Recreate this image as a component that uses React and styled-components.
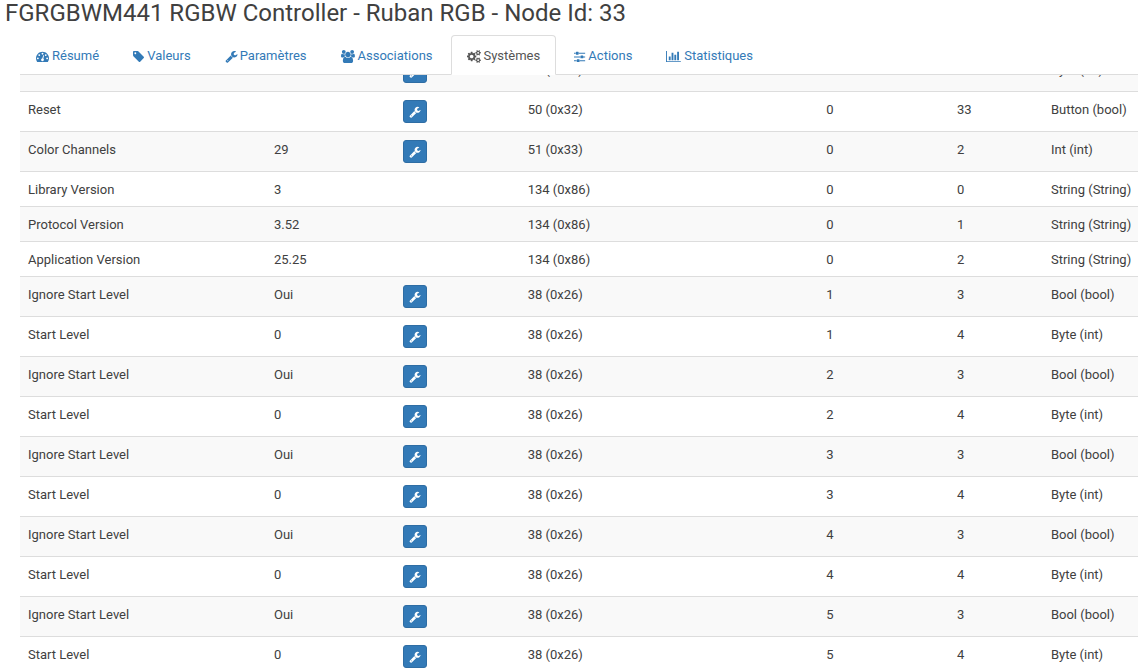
import React, { useLayoutEffect, useRef } from "react";
import styled, { createGlobalStyle } from "styled-components";

const blue = "#337ab7";
const darkBlue = "#2e6da4";
const text = "#404040";
const tabText = "#555555";
const line = "#dddddd";
const stripe = "#f9f9f9";

const GlobalStyle = createGlobalStyle`
  * {
    box-sizing: border-box;
  }
  body {
    margin: 0;
    background-color: #ffffff;
    color: ${text};
    font-family: Roboto, "Liberation Sans", sans-serif;
    font-size: 13px;
    line-height: 18px;
  }
`;

const PageWrapper = styled.div`
  display: flex;
  flex-direction: column;
  height: 100vh;
  overflow: hidden;
`;
const Title = styled.h1`
  margin: 0 0 9px;
  padding-left: 5px;
  font-size: 24px;
  font-weight: 400;
  line-height: 26px;
`;
const Content = styled.main`
  display: flex;
  flex: 1;
  flex-direction: column;
  min-height: 0;
  padding-left: 20px;
`;
const Tabs = styled.ul`
  display: flex;
  flex: none;
  gap: 2px;
  margin: 0;
  padding: 0;
  list-style: none;
  border-bottom: 1px solid ${line};
`;
const TabItem = styled.li`
  display: flex;
  margin-bottom: -1px;
`;
const TabLink = styled.a`
  display: flex;
  align-items: center;
  gap: 3px;
  padding: 11px 15px 9px;
  border: 1px solid transparent;
  border-radius: 4px 4px 0 0;
  color: ${(props) => (props.$active ? tabText : blue)};
  text-decoration: none;
  ${(props) =>
    props.$active &&
    `
    background-color: #ffffff;
    border-color: ${line} ${line} transparent;
  `}
`;
const IconSvg = styled.svg`
  display: block;
  flex: none;
  height: ${(props) => props.$size}px;
  overflow: visible;
  fill: currentColor;
`;
const TableWrapper = styled.div`
  flex: 1;
  min-height: 0;
  overflow-y: auto;
  scrollbar-width: none;
`;
const Table = styled.table`
  width: 100%;
  table-layout: fixed;
  border-collapse: collapse;
`;
const Col = styled.col`
  width: ${(props) => props.$width};
`;
const Row = styled.tr`
  &:nth-child(odd) {
    background-color: ${stripe};
  }
`;
const Cell = styled.td`
  padding: 9px 8px 7px;
  border-top: 1px solid ${line};
  vertical-align: top;
  white-space: nowrap;
`;
const ActionCell = styled(Cell)`
  padding: 8px;
`;
const EditButton = styled.button`
  display: flex;
  align-items: center;
  justify-content: center;
  width: 24px;
  height: 23px;
  padding: 0;
  border: 1px solid ${darkBlue};
  border-radius: 3px;
  background-color: ${blue};
  color: #ffffff;
  cursor: pointer;
`;

const smallCog =
  "v140q0 16-149 31-12 27-30 52 51 113 51 138 0 4-4 7-122 71-124 71-8 0-46-47t-52-68q-20 2-30 2t-30-2q-14 21-52 68t-46 47q-2 0-124-71-4-3-4-7 0-25 51-138-18-25-30-52-149-15-149-31v-140q0-16 149-31 13-29 30-52-51-113-51-138 0-4 4-7 4-2 35-20t59-34 30-16q8 0 46 46.500t52 67.500q20-2 30-2t30 2q51-71 92-112l6-2q4 0 124 70 4 3 4 7 0 25-51 138 17 23 30 52 149 15 149 31z";
const dot =
  "q0-53-37.500-90.500t-90.500-37.500-90.500 37.500-37.500 90.500 37.500 90.500 90.500 37.500 90.500-37.500 37.500-90.500z";

const icons = {
  tachometer: {
    width: 1792,
    path: `M384 1152${dot}m192-448${dot}m428 481l101-382q6-26-7.500-48.500t-38.500-29.500-48 6.500-30 39.500l-101 382q-60 5-107 43.500t-63 98.500q-20 77 20 146t117 89 146-20 89-117q16-60-6-117t-72-91zm660-33${dot}m-640-640${dot}m448 192${dot}m320 448q0 261-141 483-19 29-54 29h-1402q-35 0-54-29-141-221-141-483 0-182 71-348t191-286 286-191 348-71 348 71 286 191 191 286 71 348z`,
  },
  tag: {
    width: 1536,
    path: `M448 448${dot}m1067 576q0 53-37 90l-491 492q-39 37-91 37-53 0-90-37l-715-716q-38-37-64.500-101t-26.500-117v-416q0-52 38-90t90-38h416q53 0 117 26.500t102 64.500l715 714q37 39 37 91z`,
  },
  wrench: {
    width: 1664,
    path: "M448 1472q0-26-19-45t-45-19-45 19-19 45 19 45 45 19 45-19 19-45zm644-420l-682 682q-37 37-90 37-52 0-91-37l-106-108q-38-36-38-90 0-53 38-91l681-681q39 98 114.500 173.500t173.500 114.500zm634-435q0 39-23 106-47 134-164.500 217.500t-258.500 83.500q-185 0-316.500-131.500t-131.500-316.500 131.500-316.500 316.500-131.500q58 0 121.500 16.500t107.500 46.500q16 11 16 28t-16 28l-293 169v224l193 107q5-3 79-48.500t135.500-81 70.500-35.500q15 0 23.500 10t8.500 25z",
  },
  users: {
    width: 1920,
    path: "M593 896q-162 5-265 128h-134q-82 0-138-40.500t-56-118.500q0-353 124-353 6 0 43.500 21t97.500 42.500 119 21.500q67 0 133-23-5 37-5 66 0 139 81 256zm1071 637q0 120-73 189.500t-194 69.500h-874q-121 0-194-69.500t-73-189.500q0-53 3.500-103.500t14-109 26.500-108.500 43-97.500 62-81 85.500-53.500 111.500-20q10 0 43 21.500t73 48 107 48 135 21.500 135-21.500 107-48 73-48 43-21.500q61 0 111.500 20t85.500 53.500 62 81 43 97.500 26.500 108.500 14 109 3.500 103.500zm-1024-1277q0 106-75 181t-181 75-181-75-75-181 75-181 181-75 181 75 75 181zm704 384q0 159-112.500 271.500t-271.500 112.500-271.500-112.500-112.500-271.500 112.500-271.500 271.500-112.500 271.500 112.500 112.500 271.500zm576 225q0 78-56 118.500t-138 40.500h-134q-103-123-265-128 81-117 81-256 0-29-5-66 66 23 133 23 59 0 119-21.500t97.500-42.500 43.500-21q124 0 124 353zm-128-609q0 106-75 181t-181 75-181-75-75-181 75-181 181-75 181 75 75 181z",
  },
  cogs: {
    width: 1920,
    path: `M896 896q0-106-75-181t-181-75-181 75-75 181 75 181 181 75 181-75 75-181zm768 512q0-52-38-90t-90-38-90 38-38 90q0 53 37.500 90.500t90.500 37.500 90.500-37.500 37.500-90.500zm0-1024q0-52-38-90t-90-38-90 38-38 90q0 53 37.500 90.500t90.500 37.500 90.500-37.500 37.500-90.500zm-384 421v185q0 10-7 19.500t-16 10.500l-155 24q-11 35-32 76 34 48 90 115 7 11 7 20 0 12-7 19-23 30-82.500 89.500t-78.500 59.500q-11 0-21-7l-115-90q-37 19-77 31-11 108-23 155-7 24-30 24h-186q-11 0-20-7.500t-10-17.500l-23-153q-34-10-75-31l-118 89q-7 7-20 7-11 0-21-8-144-133-144-160 0-9 7-19 10-14 41-53t47-61q-23-44-35-82l-152-24q-10-1-17-9.500t-7-19.500v-185q0-10 7-19.500t16-10.500l155-24q11-35 32-76-34-48-90-115-7-11-7-20 0-12 7-20 22-30 82-89t79-59q11 0 21 7l115 90q34-18 77-32 11-108 23-154 7-24 30-24h186q11 0 20 7.500t10 17.500l23 153q34 10 75 31l118-89q8-7 20-7 11 0 21 8 144 133 144 160 0 8-7 19-12 16-42 54t-45 60q23 48 34 82l152 23q10 2 17 10.500t7 19.500zm640 533${smallCog}m0-1024${smallCog}`,
  },
  sliders: {
    width: 1536,
    path: "M352 1408v128h-352v-128h352zm352-128q26 0 45 19t19 45v256q0 26-19 45t-45 19h-256q-26 0-45-19t-19-45v-256q0-26 19-45t45-19h256zm160-384v128h-864v-128h864zm-640-512v128h-224v-128h224zm1312 1024v128h-736v-128h736zm-960-1152q26 0 45 19t19 45v256q0 26-19 45t-45 19h-256q-26 0-45-19t-19-45v-256q0-26 19-45t45-19h256zm640 512q26 0 45 19t19 45v256q0 26-19 45t-45 19h-256q-26 0-45-19t-19-45v-256q0-26 19-45t45-19h256zm320 128v128h-288v-128h288zm0-512v128h-864v-128h864z",
  },
  chart: {
    width: 2048,
    path: "M640 896v512h-256v-512h256zm384-512v1024h-256v-1024h256zm1024 1152v128h-2048v-1536h128v1408h1920zm-640-896v768h-256v-768h256zm384-384v1152h-256v-1152h256z",
  },
};

const tabs = [
  { label: "Résumé", icon: "tachometer" },
  { label: "Valeurs", icon: "tag" },
  { label: "Paramètres", icon: "wrench" },
  { label: "Associations", icon: "users" },
  { label: "Systèmes", icon: "cogs", active: true },
  { label: "Actions", icon: "sliders" },
  { label: "Statistiques", icon: "chart" },
];

const columns = ["22%", "11.5%", "11.2%", "26.7%", "11.7%", "8.4%", "8.5%"];

// name, value, editable, command class, instance, index, type
const baseRows = [
  ["", "", true, "50 (0x32)", "", "", "Byte (int)"],
  ["Reset", "", true, "50 (0x32)", 0, 33, "Button (bool)"],
  ["Color Channels", "29", true, "51 (0x33)", 0, 2, "Int (int)"],
  ["Library Version", "3", false, "134 (0x86)", 0, 0, "String (String)"],
  ["Protocol Version", "3.52", false, "134 (0x86)", 0, 1, "String (String)"],
  ["Application Version", "25.25", false, "134 (0x86)", 0, 2, "String (String)"],
];
const levelRows = [1, 2, 3, 4, 5].flatMap((instance) => [
  ["Ignore Start Level", "Oui", true, "38 (0x26)", instance, 3, "Bool (bool)"],
  ["Start Level", "0", true, "38 (0x26)", instance, 4, "Byte (int)"],
]);
const rows = [...baseRows, ...levelRows];

const Icon = ({ name, size = 13 }) => (
  <IconSvg
    $size={size}
    viewBox={`0 0 ${icons[name].width} 1792`}
    aria-hidden="true"
  >
    <path d={icons[name].path} />
  </IconSvg>
);

const App = () => {
  const tableRef = useRef(null);

  useLayoutEffect(() => {
    tableRef.current.scrollTop = 24;
  }, []);

  return (
    <PageWrapper>
      <GlobalStyle />
      <Title>FGRGBWM441 RGBW Controller - Ruban RGB - Node Id: 33</Title>
      <Content>
        <Tabs>
          {tabs.map((tab) => (
            <TabItem key={tab.label}>
              <TabLink
                href="#"
                $active={tab.active}
                aria-current={tab.active ? "page" : undefined}
              >
                <Icon name={tab.icon} />
                {tab.label}
              </TabLink>
            </TabItem>
          ))}
        </Tabs>
        <TableWrapper ref={tableRef}>
          <Table>
            <colgroup>
              {columns.map((width, index) => (
                <Col key={index} $width={width} />
              ))}
            </colgroup>
            <tbody>
              {rows.map(
                ([name, value, editable, commandClass, instance, id, type]) => (
                  <Row key={`${name}-${instance}`}>
                    <Cell>{name}</Cell>
                    <Cell>{value}</Cell>
                    <ActionCell>
                      {editable && (
                        <EditButton type="button" aria-label="Modifier">
                          <Icon name="wrench" size={12} />
                        </EditButton>
                      )}
                    </ActionCell>
                    <Cell>{commandClass}</Cell>
                    <Cell>{instance}</Cell>
                    <Cell>{id}</Cell>
                    <Cell>{type}</Cell>
                  </Row>
                )
              )}
            </tbody>
          </Table>
        </TableWrapper>
      </Content>
    </PageWrapper>
  );
};

export default App;
